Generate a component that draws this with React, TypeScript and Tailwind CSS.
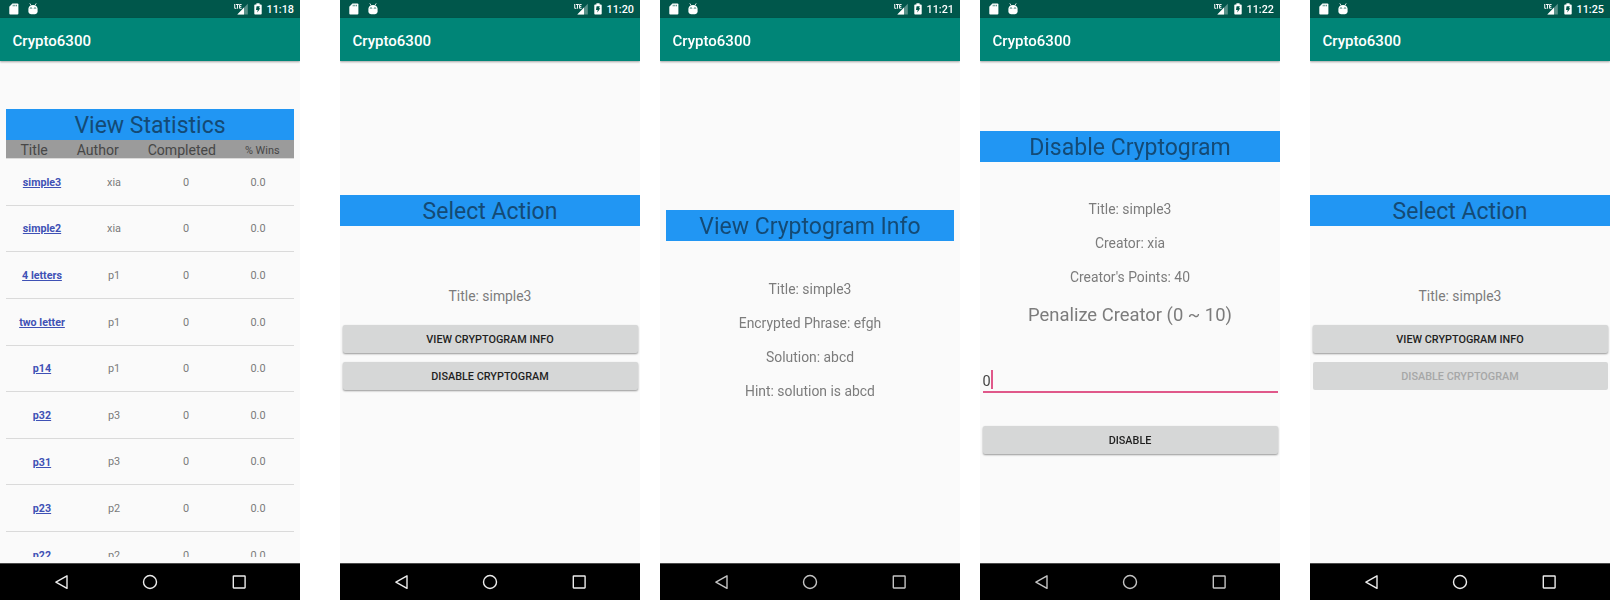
import type { ReactNode } from "react";

function StatusBar({ time }: { time: string }) {
  return (
    <div className="flex h-[18px] shrink-0 items-center bg-[#00574b] pr-[6px] pl-[9px] text-white">
      <svg className="h-[12px] w-[10px]" viewBox="0 0 10 12">
        <path d="M3.400 .6h5a1 1 0 0 1 1 1v9a1 1 0 0 1-1 1H1.300a1 1 0 0 1-1-1V3.800z" fill="currentColor" />
        <path d="M4.200 1.800v1.500M5.800 1.800v1.500M7.400 1.800v1.500" stroke="#00574b" strokeWidth=".7" />
      </svg>
      <svg className="ml-[8.500px] h-[12px] w-[10px]" viewBox="0 0 10 12">
        <path d="M1.800 .4l1.300 2M8.200 .4l-1.300 2" stroke="currentColor" strokeWidth=".8" />
        <path d="M.4 5.800C.6 3.200 2.200 1.900 5 1.900s4.400 1.300 4.600 3.900H.4z" fill="currentColor" />
        <path d="M.4 5.400h9.200v3c0 1.900-1.800 2.900-4.600 2.900S.4 10.300.4 8.400z" fill="currentColor" />
        <circle cx="3" cy="5" r=".65" fill="#00574b" />
        <circle cx="7" cy="5" r=".65" fill="#00574b" />
      </svg>
      <svg className="ml-auto h-[12px] w-[14px]" viewBox="0 0 14 12">
        <path d="M13.800 .8V11.500H3.300z" fill="currentColor" opacity=".35" />
        <path d="M10 4.600V11.500H3.300z" fill="currentColor" />
        <path d="M0 .3h8v6H0z" fill="#00574b" />
        <path d="M.7 1v4.300h1.700M1.900 1.500h3M3.500 1.500v4.200M7.600 1.500H5.600v3.800h2M5.600 3.400h1.700" fill="none" stroke="currentColor" strokeWidth=".95" />
      </svg>
      <svg className="ml-[6px] h-[12px] w-[8px]" viewBox="0 0 8 12">
        <path d="M2.400 .3h3.200v1.200h1.300a.8.8 0 0 1 .8.8v8.500a.8.8 0 0 1-.8.8H1.100a.8.8 0 0 1-.8-.8V2.300a.8.8 0 0 1 .8-.8h1.300z" fill="currentColor" />
        <path d="M2.600 3.300h3.200L5.100 5.300h1.200L3.300 9.600l.4-2.500H2z" fill="#00574b" />
      </svg>
      <span className="ml-[5px] pt-px text-[10.800px] leading-[18px] font-medium">{time}</span>
    </div>
  );
}

function NavBar({ dim }: { dim?: boolean }) {
  return (
    <div className="flex h-[37px] shrink-0 items-center border-t border-[#4a4a4a] bg-black pl-[55px]">
      <svg className={dim ? "h-[16px] w-[192px] text-[#c4c4c4]" : "h-[16px] w-[192px] text-[#ececec]"} viewBox="0 0 192 16" fill="none" stroke="currentColor" strokeWidth="1.400">
        <path d="M12 1.800v12.600L.9 8.100z" strokeLinejoin="round" />
        <circle cx="95" cy="8" r="6.500" />
        <rect x="178.300" y="2" width="11.800" height="12" rx=".4" />
      </svg>
    </div>
  );
}

function Phone({ time, soft, className, children }: { time: string; soft?: boolean; className?: string; children: ReactNode }) {
  return (
    <section className={`h-[600px] w-[300px] shrink-0 overflow-hidden bg-[#fafafa] ${className ?? ""}`}>
      <div className={soft ? "flex h-full flex-col blur-[0.5px]" : "flex h-full flex-col"}>
        <StatusBar time={time} />
        <header className="z-10 flex h-[43px] shrink-0 items-center bg-[#008577] pt-[3px] pl-[12.500px] text-[15px] font-medium text-white shadow-[0_1px_2px_rgba(0,0,0,0.35)]">
          Crypto6300
        </header>
        <main className="flex min-h-0 flex-1 flex-col">{children}</main>
        <NavBar dim={soft} />
      </div>
    </section>
  );
}

function Banner({ children }: { children: ReactNode }) {
  return (
    <h1 className="h-[31px] shrink-0 bg-[#2196f3] text-center text-[23px] leading-[34px] text-[#144a75]">{children}</h1>
  );
}

function Button({ children, disabled }: { children: ReactNode; disabled?: boolean }) {
  return (
    <button
      disabled={disabled}
      className="mx-[2.500px] h-[28px] shrink-0 rounded-[2px] bg-[#d6d7d7] text-center text-[10.850px] leading-[29px] font-medium text-[#1f1f1f] shadow-[0_1px_2px_rgba(0,0,0,0.4)] disabled:text-[#a6a7a7] disabled:shadow-none"
    >
      {children}
    </button>
  );
}

function Line({ children }: { children: ReactNode }) {
  return <p className="h-[34px] shrink-0 text-center text-[13.900px] leading-[34px] text-[#7c7c7c]">{children}</p>;
}

const rows = [
  ["simple3", "xia"],
  ["simple2", "xia"],
  ["4 letters", "p1"],
  ["two letter", "p1"],
  ["p14", "p1"],
  ["p32", "p3"],
  ["p31", "p3"],
  ["p23", "p2"],
  ["p22", "p2"],
];

function Statistics() {
  return (
    <div className="mx-[6px] mt-[48px] mb-[6px] flex min-h-0 flex-1 flex-col overflow-hidden">
      <Banner>View Statistics</Banner>
      <div className="flex h-[18px] shrink-0 items-center justify-around bg-[#9b9b9b] text-[14.100px] leading-[18px] text-[#474747]">
        <span className="pt-[2px]">Title</span>
        <span className="pt-[2px]">Author</span>
        <span className="pt-[2px]">Completed</span>
        <span className="pt-[4px] text-[10.900px]">% Wins</span>
      </div>
      {rows.map(([title, author]) => (
        <div key={title} className="grid h-[46.650px] shrink-0 grid-cols-4 items-center border-t border-[#dadada] pt-[2px] text-center text-[10.900px] text-[#7a7a7a]">
          <a className="text-[10.700px] font-bold text-[#3f51b5] underline">{title}</a>
          <span>{author}</span>
          <span>0</span>
          <span>0.0</span>
        </div>
      ))}
    </div>
  );
}

function SelectAction({ disabled }: { disabled?: boolean }) {
  return (
    <div className="flex flex-col pt-[133.500px]">
      <Banner>Select Action</Banner>
      <div className="h-[53.500px]" />
      <Line>Title: simple3</Line>
      <div className="mt-[12px] flex flex-col gap-[8.500px]">
        <Button>VIEW CRYPTOGRAM INFO</Button>
        <Button disabled={disabled}>DISABLE CRYPTOGRAM</Button>
      </div>
    </div>
  );
}

export default function App() {
  return (
    <div className="flex h-[601px] w-[1611px] overflow-hidden bg-white font-['Roboto',sans-serif]">
      <Phone time="11:18">
        <Statistics />
      </Phone>
      <Phone time="11:20" className="ml-[40px]">
        <SelectAction />
      </Phone>
      <Phone time="11:21" soft className="ml-[20px]">
        <div className="flex flex-col px-[6px] pt-[149px]">
          <Banner>View Cryptogram Info</Banner>
          <div className="h-[31px]" />
          <Line>Title: simple3</Line>
          <Line>Encrypted Phrase: efgh</Line>
          <Line>Solution: abcd</Line>
          <Line>Hint: solution is abcd</Line>
        </div>
      </Phone>
      <Phone time="11:22" soft className="ml-[20px]">
        <div className="flex flex-col pt-[69.500px]">
          <Banner>Disable Cryptogram</Banner>
          <div className="h-[30.500px]" />
          <Line>Title: simple3</Line>
          <Line>Creator: xia</Line>
          <Line>Creator's Points: 40</Line>
          <p className="h-[39px] text-center text-[18.400px] leading-[42px] text-[#7c7c7c]">Penalize Creator (0 ~ 10)</p>
          <div className="mx-[2.500px] mt-[34px] mb-[33px] flex h-[26px] items-center border-b-2 border-[#e0588a] text-[14.500px] text-[#444]">
            <span className="pt-[5px]">0</span>
            <span className="mt-px h-[19px] w-[2px] bg-[#e0588a]" />
          </div>
          <Button>DISABLE</Button>
        </div>
      </Phone>
      <Phone time="11:25" className="ml-[30px]">
        <SelectAction disabled />
      </Phone>
    </div>
  );
}
